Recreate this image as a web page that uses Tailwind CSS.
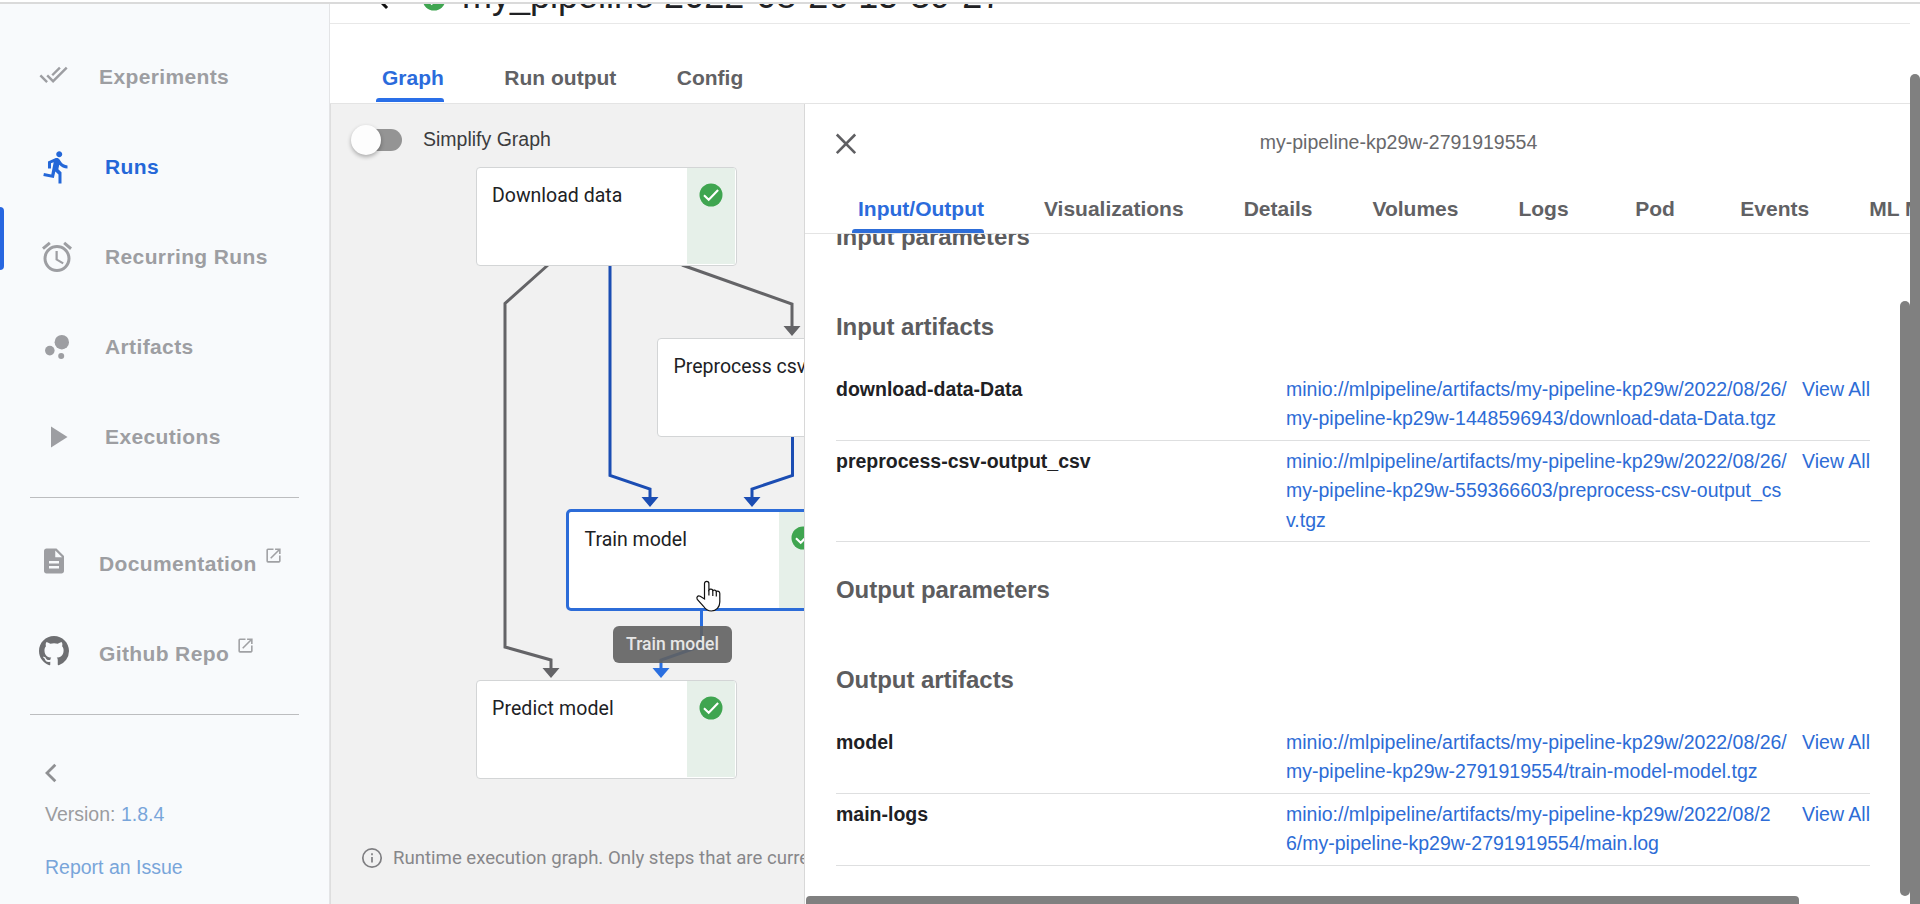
<!DOCTYPE html>
<html lang="en">
<head>
<meta charset="utf-8">
<title>Pipeline run</title>
<script src="https://cdn.jsdelivr.net/npm/@tailwindcss/browser@4"></script>
</head>
<body class="h-screen overflow-hidden bg-white font-['Liberation_Sans',sans-serif] text-[19.5px] text-[#202124]">
<svg class="hidden">
  <symbol id="check" viewBox="0 0 24 24"><circle cx="12" cy="12" r="11.5" fill="#3fa550"/><path d="M5 12.3l4.7 4.5 9.4-9.8" fill="none" stroke="#fff" stroke-width="2.1"/></symbol>
  <symbol id="open" viewBox="0 0 24 24"><path d="M19 19H5V5h7V3H5a2 2 0 0 0-2 2v14a2 2 0 0 0 2 2h14c1.1 0 2-.9 2-2v-7h-2v7zM14 3v2h3.59l-9.83 9.83 1.41 1.41L19 6.41V10h2V3h-7z"/></symbol>
</svg>
<div class="flex h-[904px] w-[1920px] flex-col overflow-hidden">
  <div class="h-1 shrink-0 border-b-2 border-[#dadada] bg-white"></div>
  <div class="flex min-h-0 flex-1">

    <!-- Side navigation -->
    <aside class="relative flex w-[330px] shrink-0 flex-col border-r border-[#e3e4e6] bg-[#f8fafc] pt-[28px] text-[21px] font-bold tracking-[0.375px] text-[#9d9ea2]">
      <div class="absolute left-0 top-[203px] h-[63px] w-1 rounded-r-[4px] bg-[#2766e0]"></div>
      <div class="flex h-[90px] shrink-0 items-center pl-[39px]">
        <div class="-mt-[5px] w-[60px]"><svg class="size-[29px] fill-[#9d9ea2]" viewBox="0 0 24 24"><path d="M18 7l-1.41-1.41-6.34 6.34 1.41 1.41L18 7zm4.24-1.41L11.66 16.17 7.48 12l-1.41 1.41L11.66 19l12-12-1.42-1.41zM.41 13.41L6 19l1.41-1.41L1.83 12 .41 13.41z"/></svg></div>
        <span>Experiments</span>
      </div>
      <div class="flex h-[90px] shrink-0 items-center pl-[39px] text-[#2467d8]">
        <div class="w-[66px]"><svg class="size-9 fill-[#2467d8]" viewBox="0 0 24 24"><path d="M13.49 5.48c1.1 0 2-.9 2-2s-.9-2-2-2-2 .9-2 2 .9 2 2 2zm-3.6 13.9l1-4.4 2.1 2v6h2v-7.5l-2.1-2 .6-3c1.3 1.5 3.3 2.5 5.5 2.5v-2c-1.9 0-3.5-1-4.3-2.4l-1-1.6c-.4-.6-1-1-1.7-1-.3 0-.5.1-.8.1l-5.2 2.2v4.7h2v-3.4l1.8-.7-1.6 8.1-4.9-1-.4 2 7 1.4z"/></svg></div>
        <span>Runs</span>
      </div>
      <div class="flex h-[90px] shrink-0 items-center pl-[39px]">
        <div class="w-[66px]"><svg class="size-9 fill-[#9d9ea2]" viewBox="0 0 24 24"><path d="M22 5.72l-4.6-3.86-1.29 1.53 4.6 3.86L22 5.72zM7.88 3.39L6.6 1.86 2 5.71l1.29 1.53 4.59-3.85zM12.5 8H11v6l4.75 2.85.75-1.23-4-2.37V8zM12 4c-4.97 0-9 4.03-9 9s4.02 9 9 9c4.97 0 9-4.03 9-9s-4.03-9-9-9zm0 16c-3.87 0-7-3.13-7-7s3.13-7 7-7 7 3.13 7 7-3.13 7-7 7z"/></svg></div>
        <span>Recurring Runs</span>
      </div>
      <div class="flex h-[90px] shrink-0 items-center pl-[39px]">
        <div class="w-[66px]"><svg class="size-9 fill-[#9d9ea2]" viewBox="0 0 24 24"><circle cx="7.2" cy="14.4" r="3.2"/><circle cx="14.8" cy="18" r="2"/><circle cx="15.2" cy="8.8" r="4.8"/></svg></div>
        <span>Artifacts</span>
      </div>
      <div class="flex h-[90px] shrink-0 items-center pl-[39px]">
        <div class="w-[66px]"><svg class="size-9 fill-[#9d9ea2]" viewBox="0 0 24 24"><path d="M8 5v14l11-7z"/></svg></div>
        <span>Executions</span>
      </div>
      <div class="mx-[30px] mt-[15px] h-px shrink-0 bg-[#bcbdbf]"></div>
      <div class="mt-5 flex h-[90px] shrink-0 items-center pl-[39px]">
        <div class="-mt-[5px] w-[60px]"><svg class="size-[30px] fill-[#9d9ea2]" viewBox="0 0 24 24"><path d="M14 2H6c-1.1 0-1.99.9-1.99 2L4 20c0 1.1.89 2 1.99 2H18c1.1 0 2-.9 2-2V8l-6-6zm2 16H8v-2h8v2zm0-4H8v-2h8v2zm-3-5V3.5L18.5 9H13z"/></svg></div>
        <span class="mt-[2px]">Documentation</span>
        <svg class="-mt-[16px] ml-[7px] size-[19px] fill-[#a0a1a4]"><use href="#open"/></svg>
      </div>
      <div class="flex h-[90px] shrink-0 items-center pl-[39px]">
        <div class="-mt-[5px] w-[60px]"><svg class="size-[30px] fill-[#6e6f72]" viewBox="0 0 16 16"><path d="M8 0C3.58 0 0 3.58 0 8c0 3.54 2.29 6.53 5.47 7.59.4.07.55-.17.55-.38 0-.19-.01-.82-.01-1.49-2.01.37-2.53-.49-2.69-.94-.09-.23-.48-.94-.82-1.13-.28-.15-.68-.52-.01-.53.63-.01 1.08.58 1.23.82.72 1.21 1.87.87 2.33.66.07-.52.28-.87.51-1.07-1.78-.2-3.64-.89-3.64-3.95 0-.87.31-1.59.82-2.15-.08-.2-.36-1.02.08-2.12 0 0 .67-.21 2.2.82.64-.18 1.32-.27 2-.27s1.36.09 2 .27c1.53-1.04 2.2-.82 2.2-.82.44 1.1.16 1.92.08 2.12.51.56.82 1.27.82 2.15 0 3.07-1.87 3.75-3.65 3.95.29.25.54.73.54 1.48 0 1.07-.01 1.93-.01 2.2 0 .21.15.46.55.38A8.01 8.01 0 0 0 16 8c0-4.42-3.58-8-8-8z"/></svg></div>
        <span class="mt-[2px]">Github Repo</span>
        <svg class="-mt-[16px] ml-[7px] size-[19px] fill-[#a0a1a4]"><use href="#open"/></svg>
      </div>
      <div class="mx-[30px] mt-[16px] h-px shrink-0 bg-[#bcbdbf]"></div>
      <svg class="ml-[44px] mt-[48px] h-5 w-[13px] shrink-0" viewBox="0 0 13 20"><path d="M11.3 1.8L3 10l8.3 8.2" fill="none" stroke="#8f9093" stroke-width="2.8"/></svg>
      <div class="ml-[45px] mt-[17px] flex h-[30px] shrink-0 items-center whitespace-pre text-[19.5px] font-normal tracking-normal text-[#9b9c9f]">Version: <span class="text-[#78a5da]">1.8.4</span></div>
      <div class="ml-[45px] mt-[23px] flex h-[30px] shrink-0 items-center text-[19.5px] font-normal tracking-normal text-[#78a5da]">Report an Issue</div>
    </aside>

    <main class="flex min-w-0 flex-1 flex-col">
      <!-- Page title, scrolled under the window edge -->
      <header class="relative h-5 shrink-0 overflow-hidden border-b border-[#e8e8e8]">
        <div class="-mt-[29px] flex h-[42px] items-center whitespace-nowrap text-[36px] leading-[42px] text-[#202124]">
          <svg class="ml-[38px] mt-[2px] size-[36px] shrink-0" viewBox="0 0 24 24"><path d="M20 11H7.830l5.590-5.590L12 4l-8 8 8 8 1.410-1.410L7.830 13H20z" fill="#111"/></svg>
          <svg class="ml-[18px] mt-[6px] size-6 shrink-0"><use href="#check"/></svg>
          <span class="ml-[16px]">my_pipeline 2022-08-26 15-39-27</span>
        </div>
      </header>

      <nav class="flex h-[80px] shrink-0 gap-[60.5px] border-b border-[#e4e4e4] pl-[52px] text-[21px] font-bold text-[#616164]">
        <div class="relative flex items-center pt-[29px] text-[#2b6bdc]">Graph
          <div class="absolute bottom-[1px] -left-[6px] right-0 h-1 rounded-t-[3px] bg-[#2a6fe8]"></div>
        </div>
        <div class="flex items-center pt-[29px]">Run output</div>
        <div class="flex items-center pt-[29px]">Config</div>
      </nav>

      <div class="flex min-h-0 flex-1">
        <!-- Graph canvas -->
        <section class="relative w-[474px] shrink-0 overflow-hidden border-l border-[#dedede] bg-[#f1f1f1] font-[Roboto,sans-serif]">
          <svg class="absolute left-[-1px] top-0 h-[800px] w-[474px]" viewBox="330 104 474 800" fill="none" stroke-width="3">
            <g stroke="#646467"><path d="M548 265L505 303.500V647L551 660V669"/><path d="M682 265L792 304V327"/></g>
            <g stroke="#1b4db3"><path d="M610 265V475.500L650 489V498"/><path d="M792.500 437V475.500L752 489V498"/></g>
            <path d="M701.500 610V646L661 660V669" stroke="#2a6fe0"/>
            <g stroke="none"><path d="M542.500 668h17L551 678zM783.500 326h17L792 336z" fill="#646467"/><path d="M641.500 497h17L650 507zM743.500 497h17L752 507z" fill="#1b4db3"/><path d="M652.500 668h17L661 678z" fill="#2a6fe0"/></g>
          </svg>

          <div class="mt-[18px] flex h-[36px] w-[240px] items-center pl-[20px] font-['Liberation_Sans',sans-serif] text-[#3c3c3e]">
            <div class="flex h-[22px] w-[51px] items-center rounded-full bg-linear-to-r from-transparent from-30% to-[#949494] to-30%"><div class="size-[30px] shrink-0 rounded-full bg-[#fdfdfd] shadow-[0_2px_4px_rgba(0,0,0,0.3)]"></div></div>
            <span class="-mt-[1px] ml-[21px] whitespace-nowrap">Simplify Graph</span>
          </div>

          <div class="absolute left-[145px] top-[63px] flex h-[99px] w-[261px] overflow-hidden rounded-[4px] border border-[#d3d5d6] bg-white">
            <div class="flex-1 whitespace-nowrap pl-[15px] pt-[16px] leading-[24px]">Download data</div>
            <div class="mb-px mr-px w-[48px] bg-[#e6f0e9] pl-[12px] pt-[15px]"><svg class="size-6"><use href="#check"/></svg></div>
          </div>
          <div class="absolute left-[326px] top-[234px] flex h-[99px] w-[261px] overflow-hidden rounded-[4px] border border-[#d3d5d6] bg-white">
            <div class="flex-1 whitespace-nowrap pl-[15.5px] pt-[16px] leading-[24px]">Preprocess csv</div>
          </div>
          <div class="absolute left-[235px] top-[405px] flex h-[102px] w-[265px] overflow-hidden rounded-[5px] border-3 border-[#2c6cd8] bg-white">
            <div class="flex-1 whitespace-nowrap pl-[15.5px] pt-[16px] leading-[24px]">Train model</div>
            <div class="w-[49px] bg-[#e6f0e9] pl-[12px] pt-[14px]"><svg class="size-6"><use href="#check"/></svg></div>
          </div>
          <div class="absolute left-[145px] top-[576px] flex h-[99px] w-[261px] overflow-hidden rounded-[4px] border border-[#d3d5d6] bg-white">
            <div class="flex-1 whitespace-nowrap pl-[15px] pt-[16px] leading-[24px] tracking-[0.1px]">Predict model</div>
            <div class="mb-px mr-px w-[48px] bg-[#e6f0e9] pl-[12px] pt-[15px]"><svg class="size-6"><use href="#check"/></svg></div>
          </div>

          <div class="absolute left-[282px] top-[522px] flex h-[37px] w-[119px] items-center justify-center rounded-[6px] bg-[#616161]/90 text-[17.5px] font-medium text-[#e6e6e6]">Train model</div>
          <svg class="absolute left-[364px] top-[475px] h-[34px] w-[28px]" viewBox="0 0 28 34"><path d="M9.500 20V4.500a2.200 2.200 0 0 1 4.400 0V11c.8-1.300 3.600-1.100 3.900.6 1-.9 3.200-.5 3.500.9 1.200-.8 3.500-.1 3.500 2v8.500c0 5-3.500 9-8.500 9-4 0-6-2-8-5L2.300 20.500C1 18 3 16 5.200 17.300z" fill="#fff" stroke="#111" stroke-width="1.200"/><path d="M13.900 11v5.500M17.800 11.500v5.500M21.300 12.500v5" stroke="#111" stroke-width="1.200"/></svg>

          <div class="absolute left-[30px] top-[740px] flex h-7 items-center whitespace-nowrap text-[18.6px] text-[#87878a]">
            <svg class="size-[22px]" viewBox="0 0 22 22" fill="none" stroke="#7f7f82" stroke-width="1.700"><circle cx="11" cy="11" r="9.200"/><path d="M11 10v5.500M11 6.300v2"/></svg>
            <span class="pl-[10px] pt-[2px]">Runtime execution graph. Only steps that are currently running</span>
          </div>
        </section>

        <!-- Step details panel -->
        <section class="relative flex min-w-0 flex-1 flex-col border-l border-[#d8d8d8] bg-white">
          <div class="flex h-[78px] shrink-0 items-center pl-[30px]">
            <svg class="mt-[2px] size-[22px]" viewBox="0 0 22 22"><path d="M1.800 1.500l18.400 18.600M20.200 1.500L1.800 20.100" stroke="#5f5f62" stroke-width="2.600"/></svg>
            <div class="flex-1 pl-[33px] pr-[3px] text-center text-[#68686b]">my-pipeline-kp29w-2791919554</div>
          </div>
          <nav class="flex h-[52px] shrink-0 gap-[60px] overflow-hidden whitespace-nowrap border-b border-[#e4e4e4] pl-[53px] text-[21px] font-bold text-[#616164]">
            <div class="relative flex items-center pt-[3px] text-[#2b6bdc]">Input/Output
              <div class="absolute bottom-0 -left-[6px] right-0 h-1 rounded-t-[3px] bg-[#2d6dd8]"></div>
            </div>
            <div class="flex items-center pt-[3px]">Visualizations</div>
            <div class="flex items-center pt-[3px]">Details</div>
            <div class="flex items-center pt-[3px]">Volumes</div>
            <div class="flex items-center pt-[3px]">Logs</div>
            <div class="ml-[6.500px] flex items-center pt-[3px]">Pod</div>
            <div class="ml-[5.500px] flex items-center pt-[3px]">Events</div>
            <div class="flex items-center pt-[3px]">ML Metadata</div>
          </nav>
          <div class="flex min-h-0 flex-1 flex-col overflow-hidden pl-[31px] pr-[40px] leading-[29.250px]">
            <h2 class="-mt-3 h-[30px] shrink-0 text-[24px] font-bold leading-[30px] tracking-[-0.050px] text-[#5c5c5e]">Input parameters</h2>
            <h2 class="mt-[60px] h-[30px] shrink-0 text-[24px] font-bold leading-[30px] tracking-[-0.050px] text-[#5c5c5e]">Input artifacts</h2>
            <div class="mt-[27px] flex h-[72px] shrink-0 border-b border-[#dedfe0] pt-[6px]">
              <div class="w-[450px] font-bold">download-data-Data</div>
              <div class="flex-1 whitespace-nowrap text-[#2d6cd6]">minio://mlpipeline/artifacts/my-pipeline-kp29w/2022/08/26/<br>my-pipeline-kp29w-1448596943/download-data-Data.tgz</div>
              <div class="text-[#2d6cd6]">View All</div>
            </div>
            <div class="flex h-[101px] shrink-0 border-b border-[#dedfe0] pt-[6px]">
              <div class="w-[450px] font-bold">preprocess-csv-output_csv</div>
              <div class="flex-1 whitespace-nowrap text-[#2d6cd6]">minio://mlpipeline/artifacts/my-pipeline-kp29w/2022/08/26/<br>my-pipeline-kp29w-559366603/preprocess-csv-output_cs<br>v.tgz</div>
              <div class="text-[#2d6cd6]">View All</div>
            </div>
            <h2 class="mt-[33px] h-[30px] shrink-0 text-[24px] font-bold leading-[30px] tracking-[-0.050px] text-[#5c5c5e]">Output parameters</h2>
            <h2 class="mt-[60px] h-[30px] shrink-0 text-[24px] font-bold leading-[30px] tracking-[-0.050px] text-[#5c5c5e]">Output artifacts</h2>
            <div class="mt-[27px] flex h-[72px] shrink-0 border-b border-[#dedfe0] pt-[6px]">
              <div class="w-[450px] font-bold">model</div>
              <div class="flex-1 whitespace-nowrap text-[#2d6cd6]">minio://mlpipeline/artifacts/my-pipeline-kp29w/2022/08/26/<br>my-pipeline-kp29w-2791919554/train-model-model.tgz</div>
              <div class="text-[#2d6cd6]">View All</div>
            </div>
            <div class="flex h-[72px] shrink-0 border-b border-[#dedfe0] pt-[6px]">
              <div class="w-[450px] font-bold">main-logs</div>
              <div class="flex-1 whitespace-nowrap text-[#2d6cd6]">minio://mlpipeline/artifacts/my-pipeline-kp29w/2022/08/2<br>6/my-pipeline-kp29w-2791919554/main.log</div>
              <div class="text-[#2d6cd6]">View All</div>
            </div>
          </div>
          <div class="absolute right-0 top-[197px] h-[595px] w-[10px] rounded-full bg-[#808080]"></div>
          <div class="absolute bottom-0 left-[1px] h-2 w-[993px] rounded-t-[4px] bg-[#808080]"></div>
        </section>
      </div>
    </main>
    <div class="w-[10px] shrink-0 pt-[70px]"><div class="h-full rounded-t-full bg-[#808080]"></div></div>
  </div>
</div>
</body>
</html>
